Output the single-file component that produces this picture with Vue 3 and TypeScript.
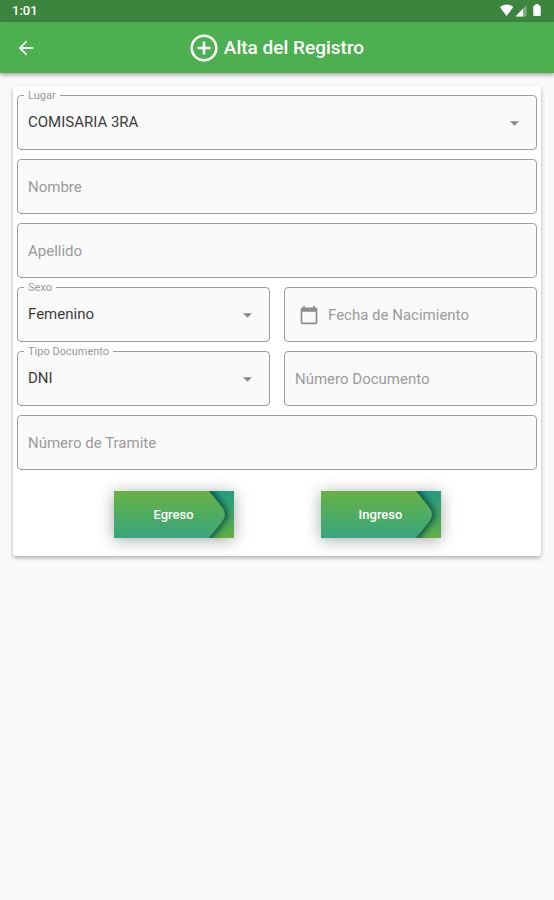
<script setup lang="ts">
import { ref } from 'vue'

const lugar = ref('COMISARIA 3RA')
const nombre = ref('')
const apellido = ref('')
const sexo = ref('Femenino')
const nacimiento = ref('')
const tipo = ref('DNI')
const documento = ref('')
const tramite = ref('')

const actions: string[] = ['Egreso', 'Ingreso']
</script>

<template>
  <div class="screen">
    <div class="status">
      <span class="clock">1:01</span>
      <svg class="status-icons" width="42" height="14" viewBox="0 0 42 14" aria-hidden="true">
        <path d="M0 4.200C3.800.6 9.400.6 13.200 4.200L6.600 13Z" fill="#fff" />
        <path d="M26.500 2V13.500H15.500Z" fill="#fff" opacity=".35" />
        <path d="M23 5.500V13.500H15.500Z" fill="#fff" />
        <path d="M35.500 1h3v1.400h1.200q1 0 1 1V12q0 1-1 1h-5.400q-1 0-1-1V3.400q0-1 1-1h1.200z" fill="#fff" />
      </svg>
    </div>

    <header class="appbar">
      <button class="back" type="button" aria-label="Volver">
        <svg width="22" height="22" viewBox="0 0 24 24" aria-hidden="true">
          <path d="M20 11H7.830l5.590-5.590L12 4l-8 8 8 8 1.410-1.410L7.830 13H20v-2z" fill="#fff" />
        </svg>
      </button>
      <h1 class="title">
        <svg width="28" height="28" viewBox="0 0 28 28" fill="none" stroke="#fff" stroke-width="2.600" aria-hidden="true">
          <circle cx="14" cy="14" r="12.300" />
          <path d="M14 7.500v13M7.500 14h13" />
        </svg>
        <span>Alta del Registro</span>
      </h1>
    </header>

    <main class="content">
      <form class="card" @submit.prevent>
        <fieldset class="field labelled wide">
          <legend><label for="lugar">Lugar</label></legend>
          <select id="lugar" v-model="lugar"><option>COMISARIA 3RA</option></select>
          <svg class="caret" viewBox="0 0 10 5" aria-hidden="true"><path d="M0 0h10L5 5z" /></svg>
        </fieldset>

        <div class="field wide">
          <input v-model="nombre" type="text" placeholder="Nombre" aria-label="Nombre" />
        </div>

        <div class="field wide">
          <input v-model="apellido" type="text" placeholder="Apellido" aria-label="Apellido" />
        </div>

        <fieldset class="field labelled">
          <legend><label for="sexo">Sexo</label></legend>
          <select id="sexo" v-model="sexo"><option>Femenino</option><option>Masculino</option></select>
          <svg class="caret" viewBox="0 0 10 5" aria-hidden="true"><path d="M0 0h10L5 5z" /></svg>
        </fieldset>

        <div class="field dated">
          <svg class="calendar" width="20" height="20" viewBox="0 0 24 24" aria-hidden="true">
            <path d="M20 3h-1V1h-2v2H7V1H5v2H4c-1.100 0-2 .9-2 2v16c0 1.100.9 2 2 2h16c1.100 0 2-.9 2-2V5c0-1.100-.9-2-2-2zm0 18H4V8h16v13z" />
          </svg>
          <input v-model="nacimiento" type="text" placeholder="Fecha de Nacimiento" aria-label="Fecha de Nacimiento" />
        </div>

        <fieldset class="field labelled">
          <legend><label for="tipo">Tipo Documento</label></legend>
          <select id="tipo" v-model="tipo"><option>DNI</option></select>
          <svg class="caret" viewBox="0 0 10 5" aria-hidden="true"><path d="M0 0h10L5 5z" /></svg>
        </fieldset>

        <div class="field">
          <input v-model="documento" type="text" placeholder="Número Documento" aria-label="Número Documento" />
        </div>

        <div class="field wide">
          <input v-model="tramite" type="text" placeholder="Número de Tramite" aria-label="Número de Tramite" />
        </div>

        <div class="actions wide">
          <button v-for="name in actions" :key="name" class="action" type="button">
            <svg class="ribbon" viewBox="0 0 120 47" preserveAspectRatio="none" aria-hidden="true">
              <defs>
                <linearGradient :id="'front' + name" x1="0" y1="0" x2="0" y2="1">
                  <stop offset="0" stop-color="#68b244" />
                  <stop offset="1" stop-color="#37a57d" />
                </linearGradient>
                <linearGradient :id="'back' + name" x1="0" y1="0" x2="0" y2="1">
                  <stop offset="0" stop-color="#249b83" />
                  <stop offset="1" stop-color="#62b044" />
                </linearGradient>
                <filter :id="'shade' + name" x="-20%" y="-20%" width="140%" height="140%">
                  <feGaussianBlur stdDeviation="3" />
                </filter>
              </defs>
              <rect width="120" height="47" :fill="`url(#back${name})`" />
              <path d="M0-4H96L111 16Q117 23.500 111 31L96 51H0Z" fill="#06434a" opacity=".85" :filter="`url(#shade${name})`" />
              <path d="M0 0H95L108 16Q114 23.500 108 31L95 47H0Z" :fill="`url(#front${name})`" />
            </svg>
            <span class="action-text">{{ name }}</span>
          </button>
        </div>
      </form>
    </main>
  </div>
</template>

<style>
body {
  margin: 0;
  background: #fafafa;
}
</style>

<style scoped>
.screen {
  min-height: 100vh;
  background: #fafafa;
  font-family: Roboto, "Liberation Sans", sans-serif;
}

.status {
  display: flex;
  align-items: center;
  justify-content: space-between;
  height: 22px;
  padding: 0 12px;
  background: #3b853e;
  color: #fff;
}

.clock {
  font-size: 13px;
  font-weight: 500;
  line-height: 22px;
}

.status-icons {
  margin-bottom: 2px;
}

.appbar {
  display: grid;
  grid-template-columns: 52px 1fr 52px;
  align-items: center;
  height: 51px;
  background: #4caf50;
  color: #fff;
  box-shadow: 0 2px 4px rgba(0, 0, 0, 0.35);
}

.back {
  display: flex;
  align-items: center;
  justify-content: center;
  height: 48px;
  padding: 0;
  border: 0;
  background: none;
}

.title {
  display: flex;
  align-items: center;
  justify-content: center;
  gap: 6px;
  margin: 0;
  font-size: 19px;
  font-weight: 500;
  line-height: 24px;
}

.content {
  padding: 13px;
}

.card {
  display: grid;
  grid-template-columns: 1fr 1fr;
  gap: 9px 14px;
  padding: 9px 4px 18px;
  border-radius: 3px;
  background: #fff;
  box-shadow: 0 2px 4px rgba(0, 0, 0, 0.3);
}

.wide {
  grid-column: 1 / -1;
}

.field {
  display: flex;
  align-items: center;
  position: relative;
  box-sizing: border-box;
  min-width: 0;
  height: 55px;
  margin: 0;
  padding: 0;
  border: 1px solid #9c9c9c;
  border-radius: 4px;
  background: #fafafa;
}

.labelled {
  display: block;
  height: 62px;
  margin-top: -7px;
}

legend {
  height: 14px;
  margin-left: 6px;
  padding: 0 4px;
  color: #999;
  font-size: 11px;
  line-height: 16px;
}

label {
  display: block;
}

input,
select {
  display: block;
  box-sizing: border-box;
  width: 100%;
  min-width: 0;
  height: 50px;
  margin: 0;
  padding: 0 10px;
  border: 0;
  outline: 0;
  background: none;
  color: #3c3c3c;
  font-family: inherit;
  font-size: 15px;
  appearance: none;
}

select {
  height: 39px;
}

input::placeholder {
  color: #9b9b9b;
  opacity: 1;
}

.caret {
  position: absolute;
  top: 19px;
  right: 17px;
  width: 9px;
  height: 5px;
  fill: #888;
  pointer-events: none;
}

.calendar {
  flex: none;
  margin-left: 14px;
  fill: #8c8c8c;
}

.dated input {
  padding-left: 9px;
}

.actions {
  display: flex;
  justify-content: center;
  gap: 87px;
  padding-top: 12px;
}

.action {
  display: grid;
  width: 120px;
  height: 47px;
  padding: 0;
  border: 0;
  background: none;
  box-shadow: 0 2px 16px rgba(0, 0, 0, 0.35);
  color: #fff;
  font-family: inherit;
  font-size: 13px;
  font-weight: 500;
}

.ribbon,
.action-text {
  grid-area: 1 / 1;
}

.ribbon {
  display: block;
  width: 100%;
  height: 47px;
  overflow: hidden;
}

.action-text {
  position: relative;
  align-self: center;
  line-height: 20px;
}
</style>
